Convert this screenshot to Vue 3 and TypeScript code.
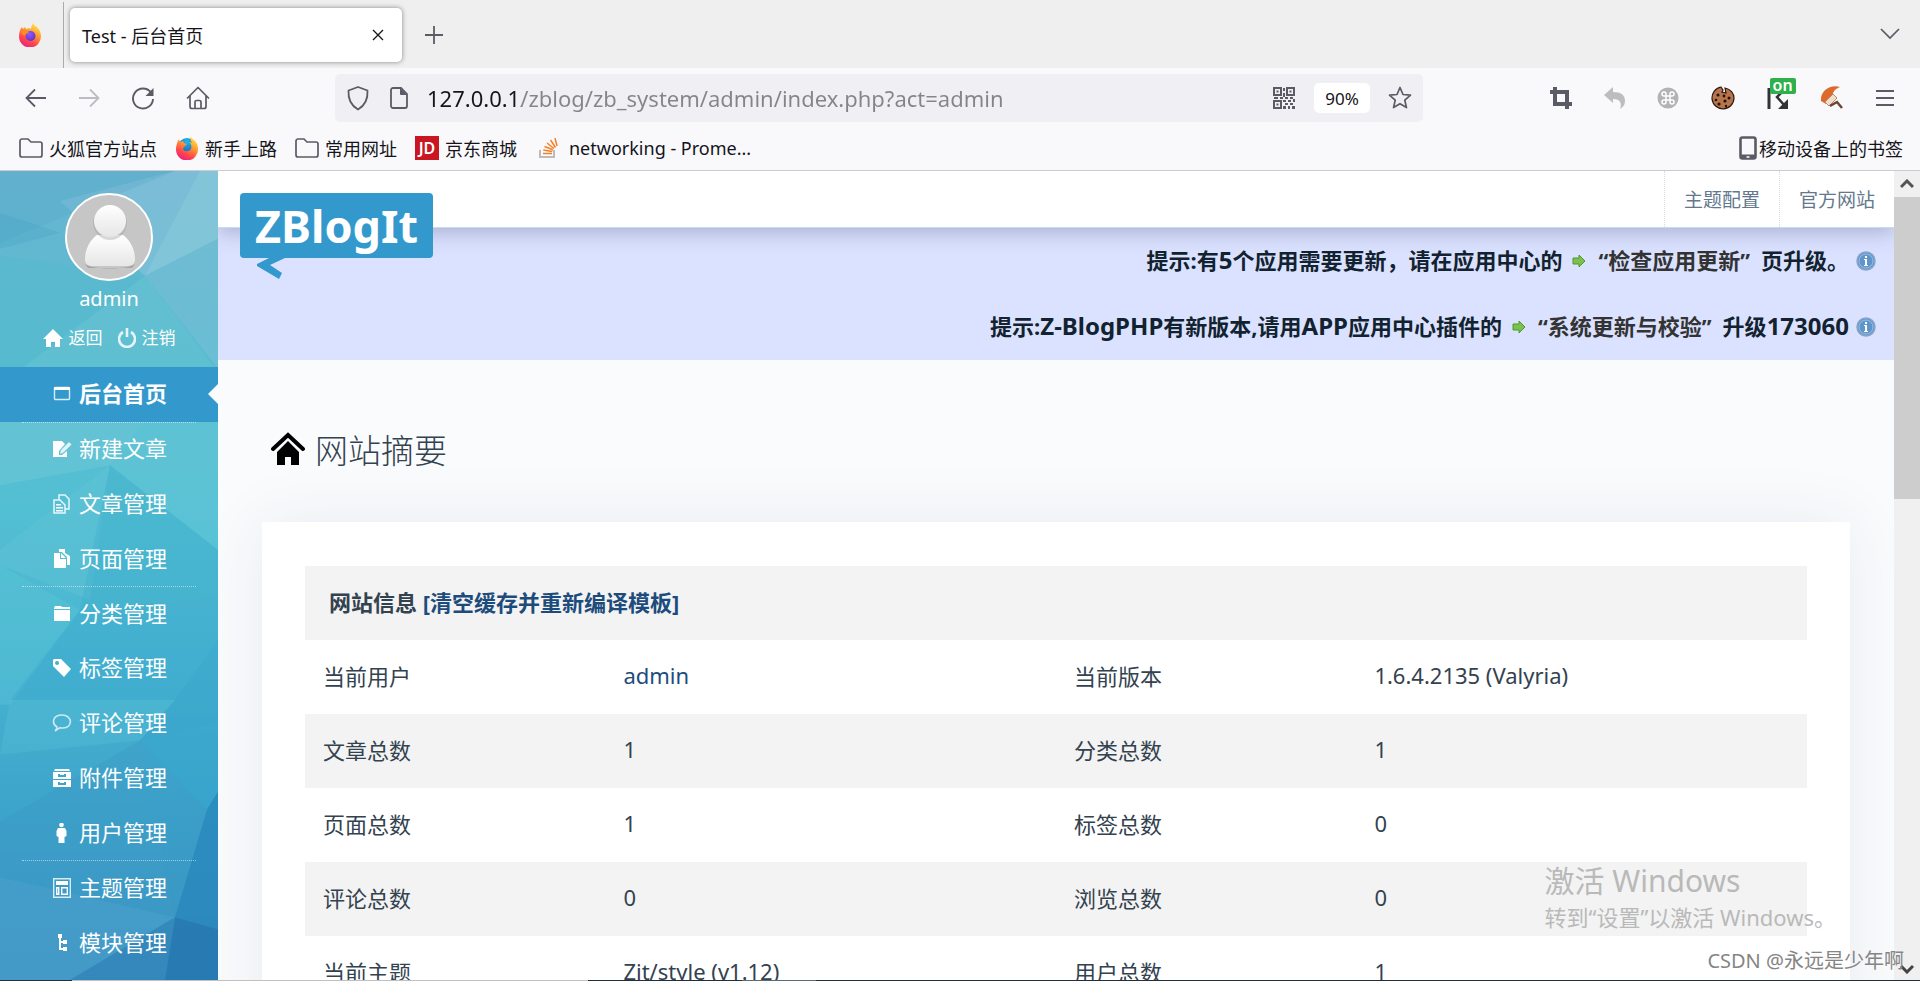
<script setup lang="ts">
interface MenuItem {
  label: string
  icon: string
  active?: boolean
  line?: boolean
}

const menu: MenuItem[] = [
  { label: '后台首页', icon: 'window', active: true },
  { label: '新建文章', icon: 'edit', line: true },
  { label: '文章管理', icon: 'docs' },
  { label: '页面管理', icon: 'pages' },
  { label: '分类管理', icon: 'folder', line: true },
  { label: '标签管理', icon: 'tag' },
  { label: '评论管理', icon: 'comment' },
  { label: '附件管理', icon: 'drawer' },
  { label: '用户管理', icon: 'user' },
  { label: '主题管理', icon: 'layout', line: true },
  { label: '模块管理', icon: 'tree' },
]

const rows: string[][] = [
  ['当前用户', 'admin', '当前版本', '1.6.4.2135 (Valyria)'],
  ['文章总数', '1', '分类总数', '1'],
  ['页面总数', '1', '标签总数', '0'],
  ['评论总数', '0', '浏览总数', '0'],
  ['当前主题', 'Zit/style (v1.12)', '用户总数', '1'],
]

const notices = [
  { before: '提示:有5个应用需要更新，请在应用中心的', link: '“检查应用更新”', after: '页升级。' },
  { before: '提示:Z-BlogPHP有新版本,请用APP应用中心插件的', link: '“系统更新与校验”', after: '升级173060' },
]

// Splits a text so that odd entries hold its Latin words and numbers.
const parts = (text: string): string[] => text.split(/([A-Za-z0-9-]+)/)
</script>

<template>
  <div class="window">
    <svg width="0" height="0" class="defs" aria-hidden="true">
      <defs>
        <linearGradient id="fxBody" x1="0.8" y1="0" x2="0.3" y2="1">
          <stop offset="0" stop-color="#fff04f" />
          <stop offset="0.4" stop-color="#ff9a2e" />
          <stop offset="0.75" stop-color="#ff4250" />
          <stop offset="1" stop-color="#e8217f" />
        </linearGradient>
        <radialGradient id="globe" cx="0.4" cy="0.3" r="0.8">
          <stop offset="0" stop-color="#9059ff" />
          <stop offset="1" stop-color="#5b2fc4" />
        </radialGradient>
        <radialGradient id="globeBlue" cx="0.5" cy="0.2" r="0.9">
          <stop offset="0" stop-color="#22b5f0" />
          <stop offset="1" stop-color="#134a9c" />
        </radialGradient>
        <linearGradient id="person" x1="0" y1="0" x2="0" y2="1">
          <stop offset="0" stop-color="#ffffff" />
          <stop offset="1" stop-color="#e6e6e6" />
        </linearGradient>
        <linearGradient id="sideBase" x1="0" y1="0" x2="0" y2="1">
          <stop offset="0" stop-color="#68b5d0" />
          <stop offset="0.2" stop-color="#5bbbd0" />
          <stop offset="0.42" stop-color="#53bfd3" />
          <stop offset="0.6" stop-color="#48b4d1" />
          <stop offset="0.8" stop-color="#3ca3ca" />
          <stop offset="1" stop-color="#3c92c2" />
        </linearGradient>
      </defs>
    </svg>

    <header class="chrome">
      <div class="tabs">
        <button class="fx" aria-label="Firefox">
          <svg width="24" height="24" viewBox="0 0 24 24">
            <path d="M15 0c1 2 2 3 4 4 2 2 4 5 4 9a11 11 0 0 1-22 1C1 10 2 6 4 4l1 2 2-2 1 2c2-1 4-1 5 0 0-2 1-4 2-6z" fill="url(#fxBody)" />
            <circle cx="12.500" cy="13" r="5" fill="url(#globe)" />
            <path d="M3 8c3-1 6-1 8 2-2 0-4 1-4 3-2-1-4-3-4-5z" fill="#ff8a1f" />
          </svg>
        </button>
        <div class="tab">
          <span>Test - 后台首页</span>
          <button aria-label="关闭标签页">
            <svg width="12" height="12" viewBox="0 0 12 12"><path d="M1 1l10 10M11 1L1 11" stroke="#15141a" stroke-width="1.300" /></svg>
          </button>
        </div>
        <button class="plus" aria-label="新标签页">
          <svg width="18" height="18" viewBox="0 0 18 18"><path d="M9 0v18M0 9h18" stroke="#5b5b66" stroke-width="1.800" /></svg>
        </button>
        <button class="tablist" aria-label="列出所有标签页">
          <svg width="20" height="12" viewBox="0 0 20 12"><path d="M1 1l9 9 9-9" fill="none" stroke="#5b5b66" stroke-width="1.700" /></svg>
        </button>
      </div>

      <div class="toolbar">
        <div class="nav">
          <button aria-label="后退"><svg width="22" height="20" viewBox="0 0 22 20"><path d="M21 10H2M10 1.500L1.500 10l8.500 8.500" fill="none" stroke="#5b5b66" stroke-width="1.800" /></svg></button>
          <button aria-label="前进"><svg width="22" height="20" viewBox="0 0 22 20"><path d="M1 10h19M12 1.500l8.500 8.500-8.500 8.500" fill="none" stroke="#bcbcc2" stroke-width="1.800" /></svg></button>
          <button aria-label="刷新"><svg width="24" height="24" viewBox="0 0 24 24"><path d="M20 6.500A10 10 0 1 0 22 13" fill="none" stroke="#5b5b66" stroke-width="1.900" /><path d="M22.500 2v8h-8z" fill="#5b5b66" /></svg></button>
          <button aria-label="主页"><svg width="24" height="24" viewBox="0 0 24 24" fill="none" stroke="#5b5b66" stroke-width="1.700" stroke-linejoin="round" stroke-linecap="round"><path d="M1.500 12L12 1.500 22.500 12M4 10v10.500a2 2 0 0 0 2 2h12a2 2 0 0 0 2-2V10M9 22v-6a1.500 1.500 0 0 1 1.500-1.500h3A1.500 1.500 0 0 1 15 16v6" /></svg></button>
        </div>

        <div class="urlbar">
          <svg class="shield" width="24" height="26" viewBox="0 0 24 26"><path d="M12 2l9.500 3.500c.5 8-2.500 15-9.500 19C5 20.500 2 13.500 2.500 5.500z" fill="none" stroke="#5b5b66" stroke-width="1.800" stroke-linejoin="round" /></svg>
          <svg class="doc" width="20" height="24" viewBox="0 0 20 24"><path d="M4 2h8l6 6v12a2 2 0 0 1-2 2H4a2 2 0 0 1-2-2V4a2 2 0 0 1 2-2z" fill="none" stroke="#5b5b66" stroke-width="1.800" /><path d="M11 2l7 7h-6a1 1 0 0 1-1-1z" fill="#5b5b66" /></svg>
          <input class="url" type="text" aria-label="网址" value="127.0.0.1/zblog/zb_system/admin/index.php?act=admin" />
          <button aria-label="二维码">
            <svg width="22" height="22" viewBox="0 0 22 22" fill="#5b5b66"><path fill-rule="evenodd" d="M0 0h9v9H0zM2 2v5h5V2zM13 0h9v9h-9zM15 2v5h5V2zM0 13h9v9H0zM2 15v5h5v-5z" /><path d="M3.500 3.500h2v2h-2zM16.500 3.500h2v2h-2zM3.500 16.500h2v2h-2zM10 1h2v3h-2zM10 6h2v4h-2zM1 10h4v2H1zM7 10h3v2H7zM12 10h3v2h-3zM17 10h3v2h-3zM10 13h3v2h-3zM15 13h3v2h-3zM20 12h2v3h-2zM12 16h3v2h-3zM17 16h3v2h-3zM10 19h3v3h-3zM15 19h2v3h-2zM19 19h3v3h-3z" /></svg>
          </button>
          <button class="zoom">90%</button>
          <button aria-label="收藏">
            <svg width="24" height="24" viewBox="0 0 24 24"><path d="M12 1.500l3 7 7.500.7-5.700 5 1.700 7.400L12 17.700l-6.500 3.900 1.700-7.400-5.700-5L9 8.500z" fill="none" stroke="#5b5b66" stroke-width="1.700" stroke-linejoin="round" /></svg>
          </button>
        </div>

        <div class="exts">
          <button aria-label="截图"><svg width="22" height="22" viewBox="0 0 22 22"><path d="M5 0v17h17M0 5h17v17" fill="none" stroke="#5b5b66" stroke-width="4" /></svg></button>
          <button aria-label="撤销"><svg width="22" height="22" viewBox="0 0 22 22"><path d="M0 8l9-8v5c8 0 12 3 12 9 0 4-2 6-5 8 2-5 1-10-7-10v4z" fill="#bdbdc0" /></svg></button>
          <button aria-label="快捷键">
            <svg width="22" height="22" viewBox="0 0 22 22"><circle cx="11" cy="11" r="10.500" fill="#b3b3b5" /><path d="M9 9V7a2 2 0 1 0-2 2h8a2 2 0 1 0-2-2v8a2 2 0 1 0 2-2H7a2 2 0 1 0 2 2z" fill="none" stroke="#fff" stroke-width="1.500" /></svg>
          </button>
          <button aria-label="Cookie">
            <svg width="24" height="24" viewBox="0 0 24 24"><path d="M10 1l2 3-1 2 4 1-1-5c6 1 9 6 9 10a11 11 0 1 1-13-11z" fill="#b8754b" stroke="#2c1a12" stroke-width="1.200" /><g fill="#22130c"><circle cx="7" cy="9" r="1.500" /><circle cx="13" cy="10" r="1.400" /><circle cx="18" cy="12" r="1.500" /><circle cx="5" cy="14" r="1.300" /><circle cx="14" cy="15" r="1.600" /><circle cx="8" cy="18" r="1.600" /><circle cx="15" cy="20" r="1.200" /></g></svg>
          </button>
          <button class="on-ext" aria-label="扩展开关">
            <svg width="22" height="22" viewBox="0 0 22 22"><path d="M2 1v21" stroke="#333" stroke-width="3" /><path d="M16 4l-6 6 8 9" fill="none" stroke="#333" stroke-width="2.500" /><path d="M21 12v10H11z" fill="#333" /></svg>
            <span class="badge">on</span>
          </button>
          <button aria-label="主题刷">
            <svg width="24" height="24" viewBox="0 0 24 24"><path d="M20 1C10-2 0 5 1 15l5 3 7-7c-1-5 2-8 7-10z" fill="#dd6a2c" /><path d="M5 16l8-8 4 4-8 8z" fill="#f3ddcd" stroke="#b98d72" /><path d="M10 20l7-4 5 6" fill="none" stroke="#6b4632" stroke-width="2.500" /></svg>
          </button>
          <button aria-label="菜单"><svg width="18" height="16" viewBox="0 0 18 16"><path d="M0 1h18M0 8h18M0 15h18" stroke="#5b5b66" stroke-width="1.800" /></svg></button>
        </div>
      </div>

      <nav class="bookmarks" aria-label="书签">
        <a href="#"><svg width="24" height="20" viewBox="0 0 24 20"><path d="M3 1h6l3 3h9a2 2 0 0 1 2 2v11a2 2 0 0 1-2 2H3a2 2 0 0 1-2-2V3a2 2 0 0 1 2-2z" fill="none" stroke="#5b5b66" stroke-width="1.700" /></svg>火狐官方站点</a>
        <a href="#">
          <svg width="24" height="24" viewBox="0 0 24 24"><circle cx="12" cy="11" r="9" fill="url(#globeBlue)" /><path d="M15 0c1 2 3 3 5 5 2 2 3 5 3 8a11 11 0 0 1-22 1C1 10 2 6 4 3l1 3 3-1 1 2 3 1-3 3-1 2c1 3 6 3 8 0 1-3 0-5-2-7 1 0 2 0 3 1-1-2-2-4-2-7z" fill="url(#fxBody)" /></svg>新手上路
        </a>
        <a href="#"><svg width="24" height="20" viewBox="0 0 24 20"><path d="M3 1h6l3 3h9a2 2 0 0 1 2 2v11a2 2 0 0 1-2 2H3a2 2 0 0 1-2-2V3a2 2 0 0 1 2-2z" fill="none" stroke="#5b5b66" stroke-width="1.700" /></svg>常用网址</a>
        <a href="#"><span class="jd">JD</span>京东商城</a>
        <a href="#" class="so">
          <svg width="20" height="20" viewBox="0 0 20 20"><path d="M1 12v7h14v-7" fill="none" stroke="#bcbbbb" stroke-width="2" /><path d="M4 15.500h9M4.300 12l9 1.500M5.500 8.500l8.500 3.300M8 5l7 5.500M11.500 2l5 7.500M16 0l2 8" stroke="#f48024" stroke-width="1.500" fill="none" /></svg>networking - Prome...
        </a>
        <a href="#" class="mobile"><svg width="18" height="24" viewBox="0 0 18 24"><rect x="1.500" y="1.500" width="15" height="21" rx="2" fill="none" stroke="#5b5b66" stroke-width="2.600" /><path d="M2 20.500h14" stroke="#5b5b66" stroke-width="4" /><path d="M7.500 21h3" stroke="#fff" stroke-width="1.500" /></svg>移动设备上的书签</a>
      </nav>
    </header>

    <div class="viewport">
      <aside class="side">
        <svg class="poly" viewBox="0 0 218 811" preserveAspectRatio="none" aria-hidden="true">
          <rect width="218" height="811" fill="url(#sideBase)" />
          <path d="M60 30L175 0h43v68l-73 37z" fill="#9bc8de" opacity="0.4" />
          <path d="M200 0h18v68l-73 37z" fill="#8fd0dc" opacity="0.4" />
          <path d="M0 0h175L0 72z" fill="#4fa3c8" opacity="0.25" />
          <path d="M0 42l60 20L0 78z" fill="#3f9cc5" opacity="0.25" />
          <path d="M145 105l73-37v130z" fill="#7cc0d6" opacity="0.5" />
          <path d="M145 105l70 93H20z" fill="#69c8d4" opacity="0.35" />
          <path d="M0 85l145 20L20 200H0z" fill="#52bace" opacity="0.4" />
          <path d="M0 250h145l-35 45L0 315z" fill="#7acddb" opacity="0.35" />
          <path d="M110 295l35-45h73v130z" fill="#6accda" opacity="0.35" />
          <path d="M110 295L90 430 0 395v-15z" fill="#68c7d8" opacity="0.35" />
          <path d="M110 295l108 85v48L80 440z" fill="#38a8cb" opacity="0.3" />
          <path d="M0 395l80 45-70 95H0z" fill="#5ec9d6" opacity="0.35" />
          <path d="M80 440l138-12v42l-43 60H10z" fill="#38a5cd" opacity="0.3" />
          <path d="M218 470v83l-78 18 35-41z" fill="#2f9ec8" opacity="0.35" />
          <path d="M10 530h165l-35 41L0 585z" fill="#59c4d8" opacity="0.3" />
          <path d="M140 571L0 652v56l175 40z" fill="#3d98c5" opacity="0.4" />
          <path d="M140 571l67 69-32 108z" fill="#3796c5" opacity="0.3" />
          <path d="M140 571l78-18v69l-11 18z" fill="#31a2cc" opacity="0.4" />
          <path d="M207 640l11-18v138l-43-12z" fill="#2583bb" opacity="0.7" />
          <path d="M0 708l175 40-105 63H0z" fill="#4a9fca" opacity="0.6" />
          <path d="M175 748l-105 63h95z" fill="#2f80b5" opacity="0.6" />
          <path d="M175 748l43 12v51h-53z" fill="#2374ae" opacity="0.8" />
        </svg>

        <div class="profile">
          <svg class="avatar" width="88" height="88" viewBox="0 0 88 88" role="img" aria-label="头像">
            <circle cx="44" cy="44" r="43" fill="#c6c6c6" stroke="#fff" stroke-width="2" />
            <path d="M20 71c8 6 42 6 50 0l-3 4H23z" fill="#a5a5a5" />
            <path d="M32 42c-7 5-12 14-12 24 0 5 3 7 7 7h35c5 0 8-2 8-7 0-10-5-19-12-24z" fill="url(#person)" />
            <circle cx="45" cy="30" r="17" fill="#9f9f9f" opacity="0.4" />
            <circle cx="45" cy="28" r="16" fill="url(#person)" />
          </svg>
          <div class="name">admin</div>
          <div class="quick">
            <a href="#"><svg width="20" height="18" viewBox="0 0 20 18"><path d="M10 0L0 10h3v8h5v-5h4v5h5v-8h3z" fill="#fff" /></svg>返回</a>
            <a href="#"><svg width="18" height="20" viewBox="0 0 18 20"><path d="M5 4a8 8 0 1 0 8 0" fill="none" stroke="#e4f5fa" stroke-width="2.600" /><path d="M9 0v9" stroke="#e4f5fa" stroke-width="2.600" /></svg>注销</a>
          </div>
        </div>

        <nav class="menu">
          <a v-for="m in menu" :key="m.label" href="#" :class="{ active: m.active, line: m.line }">
            <svg width="20" height="20" viewBox="0 0 20 20" fill="#fff" stroke="none">
              <template v-if="m.icon === 'window'"><rect x="2.500" y="3.500" width="15" height="12" rx="1" fill="none" stroke="#d8edf8" stroke-width="1.400" /><path d="M2 3h16v3H2z" /></template>
              <template v-else-if="m.icon === 'edit'"><path d="M1 2h9l3 3-6 7v4h3l5-4v6H1z" /><path d="M8 15l1-4 8-8 2.500 2.500-8 8z" opacity="0.8" /></template>
              <template v-else-if="m.icon === 'docs'"><path d="M2 6h6l5 5v8H2zM7 6V1h6l4 4v10h-4" fill="none" stroke="#e6f6fa" stroke-width="1.500" /><path d="M4 10h5v1.500H4zM4 13h7v1.500H4zM4 16h7v1.500H4z" /></template>
              <template v-else-if="m.icon === 'pages'"><path d="M2 4h6v6h6v9H2z" /><path d="M9 4l5 5H9zM7 0h6v4l5 3v9h-3V8l-5-5H7z" /></template>
              <template v-else-if="m.icon === 'folder'"><path d="M2 4l1-2h6l1 1h8v2H2zM2 6h16v11H2z" /></template>
              <template v-else-if="m.icon === 'tag'"><path fill-rule="evenodd" d="M1 2l1-1h7l10 10-7 8L1 8zM5 3a2 2 0 1 0 0 4 2 2 0 0 0 0-4z" /></template>
              <template v-else-if="m.icon === 'comment'"><path d="M5 14C-1 10 1 2 10 2c11 0 11 13 1 13-1 0-2 0-3-.3L3 18c2-2 2-3 2-4z" fill="none" stroke="#cdeaf3" stroke-width="1.600" /></template>
              <template v-else-if="m.icon === 'drawer'"><path d="M3 1h14l1 2H2z" /><path fill-rule="evenodd" d="M1 4h18v7H1zM6 6v3h8V6h-2v1H8V6zM1 12h18v7H1zM6 14v3h8v-3h-2v1H8v-1z" /></template>
              <template v-else-if="m.icon === 'user'"><circle cx="9.500" cy="2" r="2.300" /><path d="M6 5h7l1.500 3v5l-2 1v6h-6v-6l-2-1V8z" /></template>
              <template v-else-if="m.icon === 'layout'"><path d="M1.700.7h16.600v18.600H1.700z" fill="none" stroke="#d3ecf5" stroke-width="1.400" /><path d="M4 3h12v4H4z" /><path d="M4.700 9.700h2v6.600h-2zM9.700 9.700h5.600v6.600H9.700z" fill="none" stroke="#fff" stroke-width="1.400" /></template>
              <template v-else><path d="M6 1h4v4H9v3h2V7h4v4h-4v-1H9v5h2v-1h4v4h-4v-1H7V5H6z" /></template>
            </svg>
            <span>{{ m.label }}</span>
          </a>
        </nav>
      </aside>

      <main class="main">
        <div class="topbar">
          <div class="brand">
            <span>ZBlogIt</span>
            <svg width="28" height="22" viewBox="0 0 28 22" aria-hidden="true"><path d="M12 0h16L13 7l12 8-3 6L0 8V6z" fill="#3399cd" /></svg>
          </div>
          <a href="#">主题配置</a>
          <a href="#">官方网站</a>
        </div>

        <div class="notices">
          <p v-for="n in notices" :key="n.link">
            <span class="text"><span v-for="(t, i) in parts(n.before)" :key="i" :class="{ latin: i % 2 === 1 }">{{ t }}</span></span>
            <a href="#">
              <svg width="14" height="14" viewBox="0 0 14 14"><path d="M1 4h6V1l6 6-6 6v-3H1z" fill="#7cc04f" stroke="#4a9a2c" /></svg>
              <span class="text">{{ n.link }}</span>
            </a>
            <span class="text"><span v-for="(t, i) in parts(n.after)" :key="i" :class="{ latin: i % 2 === 1 }">{{ t }}</span></span>
            <svg class="info" width="20" height="20" viewBox="0 0 20 20"><circle cx="10" cy="10" r="9" fill="#5e96cc" stroke="#8ba3c9" stroke-width="1.500" /><circle cx="10" cy="10" r="7" fill="none" stroke="#a9c6e4" stroke-width="0.800" /><path d="M8 8h3v6h1v1H8v-1h1V9H8zM9 5h2v2H9z" fill="#fff" /></svg>
          </p>
        </div>

        <h1>
          <svg width="34" height="34" viewBox="0 0 34 34"><path d="M2 17L17 3l15 14" fill="none" stroke="#000" stroke-width="4" stroke-linecap="round" /><path d="M6 20L17 9l11 11v13h-8v-8h-6v8H6z" fill="#000" /></svg>
          网站摘要
        </h1>

        <section class="card">
          <table>
            <colgroup>
              <col class="key" />
              <col class="value" />
              <col class="key" />
              <col class="value" />
            </colgroup>
            <thead>
              <tr>
                <th colspan="4">网站信息 <a href="#">[清空缓存并重新编译模板]</a></th>
              </tr>
            </thead>
            <tbody>
              <tr v-for="r in rows" :key="r[0]">
                <td>{{ r[0] }}</td>
                <td><a v-if="r[1] === 'admin'" href="#">{{ r[1] }}</a><template v-else>{{ r[1] }}</template></td>
                <td>{{ r[2] }}</td>
                <td>{{ r[3] }}</td>
              </tr>
            </tbody>
          </table>
        </section>
      </main>

      <div class="scroll" aria-hidden="true">
        <svg width="14" height="10" viewBox="0 0 14 10"><path d="M1 8l6-6 6 6" fill="none" stroke="#555" stroke-width="3" /></svg>
        <i></i>
        <svg class="down" width="14" height="10" viewBox="0 0 14 10"><path d="M1 2l6 6 6-6" fill="none" stroke="#444" stroke-width="3" /></svg>
      </div>
    </div>

    <div class="edge" aria-hidden="true"></div>
    <div class="activate">
      <div>激活 Windows</div>
      <p>转到“设置”以激活 Windows。</p>
    </div>
    <div class="credit">CSDN @永远是少年啊</div>
  </div>
</template>

<style>
body {
  margin: 0;
  overflow: hidden;
}
</style>

<style scoped>
* {
  box-sizing: border-box;
}
.window {
  position: relative;
  display: flex;
  flex-direction: column;
  height: 100vh;
  overflow: hidden;
  background: #fafbfd;
  color: #15141a;
  font-family: "Noto Sans", "Noto Sans CJK SC", sans-serif;
  font-size: 18px;
}
.defs {
  position: absolute;
}
svg {
  display: block;
  flex: none;
}
button {
  display: flex;
  align-items: center;
  justify-content: center;
  padding: 0;
  border: 0;
  background: none;
  font: inherit;
  color: inherit;
}
a {
  color: inherit;
  text-decoration: none;
}

/* browser chrome */
.chrome {
  flex: none;
  border-bottom: 1px solid #cbcbd0;
  background: #f9f9fb;
}
.tabs {
  display: flex;
  align-items: center;
  height: 68px;
  padding-right: 20px;
  background: #efefef;
}
.fx {
  width: 64px;
  height: 66px;
  margin-top: 2px;
  padding-right: 4px;
  border-right: 1px solid #ababab;
}
.tab {
  display: flex;
  align-items: center;
  justify-content: space-between;
  width: 332px;
  height: 54px;
  margin-top: 2px;
  margin-left: 6px;
  padding: 0 18px 0 12px;
  border-radius: 5px;
  background: #fff;
  box-shadow: 0 0 5px rgba(0, 0, 0, 0.45);
}
.plus {
  margin-top: 2px;
  margin-left: 23px;
}
.tablist {
  margin-left: auto;
}
.toolbar {
  display: flex;
  align-items: center;
  height: 60px;
  padding: 0 26px 0 25px;
}
.nav {
  display: flex;
  flex: none;
  gap: 31px;
  width: 310px;
}
.urlbar {
  display: flex;
  flex: 1;
  align-items: center;
  height: 48px;
  padding: 0 11px;
  border-radius: 5px;
  background: #f0f0f4;
}
.doc {
  margin: 0 18px 0 19px;
}
.url {
  flex: 1;
  min-width: 0;
  height: 32px;
  padding: 0;
  border: 0;
  outline: 0;
  background: linear-gradient(90deg, #15141a 94px, #85848b 94px);
  background-clip: text;
  -webkit-background-clip: text;
  -webkit-text-fill-color: transparent;
  font: inherit;
  font-size: 22px;
}
.zoom {
  width: 56px;
  height: 30px;
  margin: 0 18px 0 19px;
  border-radius: 5px;
  background: #fff;
  font-size: 17px;
}
.exts {
  display: flex;
  align-items: center;
  justify-content: space-between;
  width: 344px;
  margin-left: 127px;
}
.on-ext {
  position: relative;
}
.badge {
  position: absolute;
  top: -9px;
  left: 3px;
  width: 26px;
  height: 16px;
  border-radius: 2px;
  background: #2eb04a;
  color: #fff;
  font-size: 16px;
  font-weight: 600;
  line-height: 14px;
}
.bookmarks {
  display: flex;
  align-items: center;
  height: 42px;
  padding: 0 17px 2px 19px;
  gap: 18px;
}
.bookmarks a {
  display: flex;
  align-items: center;
  gap: 6px;
  white-space: nowrap;
}
.jd {
  width: 24px;
  height: 24px;
  background: #c81623;
  color: #fff;
  font-size: 16px;
  font-weight: 600;
  line-height: 24px;
  text-align: center;
}
.bookmarks .so {
  gap: 10px;
  margin-left: 4px;
}
.bookmarks .mobile {
  gap: 2px;
  margin-left: auto;
}

/* page */
.viewport {
  display: flex;
  flex: 1;
  min-height: 0;
}
.side {
  position: relative;
  flex: none;
  width: 218px;
  overflow: hidden;
  color: #fff;
}
.poly {
  position: absolute;
  inset: 0;
  width: 100%;
  height: 100%;
}
.profile {
  position: relative;
  display: flex;
  flex-direction: column;
  align-items: center;
  height: 196px;
  padding-top: 22px;
}
.name {
  margin-top: 4px;
  font-size: 20px;
  line-height: 28px;
}
.quick {
  display: flex;
  gap: 15px;
  margin-top: 11px;
  font-size: 17px;
  line-height: 28px;
}
.quick a {
  display: flex;
  align-items: center;
  gap: 6px;
}
.menu {
  position: relative;
  display: grid;
  grid-auto-rows: 1fr;
  height: 603px;
  font-size: 22px;
}
.menu a {
  position: relative;
  display: flex;
  align-items: center;
  gap: 7px;
  padding-left: 52px;
}
.menu span,
.text {
  padding-bottom: 4px;
}
.menu .active {
  background: #3399cd;
  font-weight: 700;
}
.menu .active::after {
  content: "";
  position: absolute;
  top: 17px;
  right: 0;
  border: 10px solid transparent;
  border-left: 0;
  border-right-color: #fafbfd;
}
.menu .line::before {
  content: "";
  position: absolute;
  top: 0;
  left: 22px;
  right: 22px;
  border-top: 1px dotted rgba(255, 255, 255, 0.5);
}
.main {
  flex: 1;
  min-width: 0;
  overflow: hidden;
}
.topbar {
  position: relative;
  display: flex;
  justify-content: flex-end;
  height: 57px;
  border-bottom: 1px solid #c8dcea;
  background: #fff;
  box-shadow: 0 5px 20px rgba(60, 70, 110, 0.3);
}
.topbar > a {
  display: flex;
  align-items: center;
  padding: 0 19px;
  border-left: 1px dotted #d5dde4;
  color: #63788c;
  font-size: 19px;
}
.brand {
  position: absolute;
  top: 22px;
  left: 22px;
}
.brand span {
  display: block;
  height: 65px;
  padding: 0 15px;
  border-radius: 4px;
  background: #3399cd;
  color: #fff;
  font-size: 45px;
  font-weight: 700;
  line-height: 65px;
}
.brand svg {
  margin-left: 17px;
}
.notices {
  padding-right: 18px;
  background: #dbe2ff;
  color: #12232f;
  font-size: 22px;
  font-weight: 700;
}
.notices p {
  display: flex;
  align-items: center;
  justify-content: flex-end;
  height: 66px;
  margin: 0;
}
.notices a {
  display: flex;
  align-items: center;
  gap: 12px;
  margin: 0 11px 0 10px;
  color: #333;
}
.latin {
  font-size: 24px;
}
.info {
  margin-left: 7px;
}
h1 {
  display: flex;
  align-items: center;
  gap: 10px;
  height: 48px;
  margin: 65px 0 49px 53px;
  color: #33424f;
  font-size: 33px;
  font-weight: 300;
}
.card {
  margin: 0 44px;
  padding: 44px 43px;
  background: #fff;
  box-shadow: 0 0 60px rgba(40, 50, 70, 0.08);
}
table {
  width: 100%;
  border-collapse: collapse;
  table-layout: fixed;
  color: #33424f;
  font-size: 22px;
}
.key {
  width: 20%;
}
.value {
  width: 30%;
}
tr {
  height: 74px;
}
th {
  padding: 0 24px 4px;
  text-align: left;
}
th,
tbody tr:nth-child(even) {
  background: #f3f3f3;
}
td {
  padding: 0 18px 4px;
}
table a {
  color: #1d4c7c;
}
.scroll {
  display: flex;
  flex: none;
  flex-direction: column;
  align-items: center;
  width: 26px;
  padding: 8px 0 6px;
  background: #f0f0f0;
}
.scroll i {
  width: 100%;
  height: 38%;
  margin-top: 8px;
  background: #cdcdcd;
}
.scroll .down {
  margin-top: auto;
}
.edge {
  flex: none;
  height: 1px;
  background: linear-gradient(90deg, #1f3040 72px, #c0c0c0 72px 588px, #1f3040 588px 742px, #5a6b7a 742px 816px, #1f3040 816px);
}

/* desktop overlays */
.activate {
  position: absolute;
  right: 84px;
  bottom: 46px;
  color: #b9b9b9;
  font-size: 30px;
  line-height: 36px;
}
.activate p {
  margin: 0;
  font-size: 22px;
}
.credit {
  position: absolute;
  right: 16px;
  bottom: 6px;
  color: #858585;
  font-size: 20px;
  line-height: 28px;
}
</style>
